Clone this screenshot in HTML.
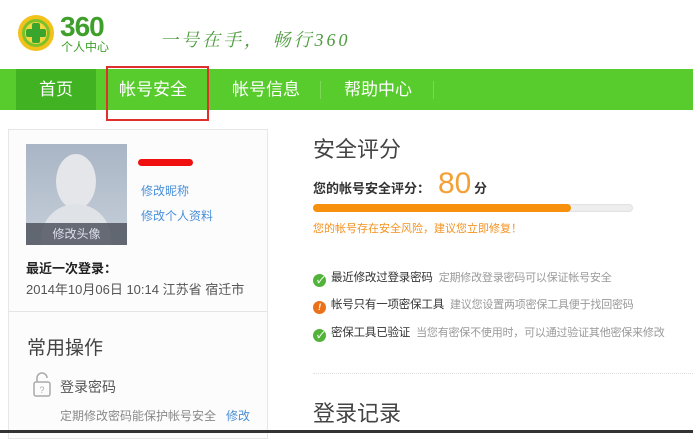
<!DOCTYPE html>
<html><head><meta charset="utf-8"><style>
*{margin:0;padding:0;box-sizing:border-box}
body{width:693px;height:433px;overflow:hidden;background:#fff;font-family:"Liberation Sans","Noto Sans CJK SC",sans-serif;position:relative;color:#333}
.a{position:absolute;white-space:nowrap}
.nav{position:absolute;left:0;top:69px;width:693px;height:41px;background:#57cc2c}
.nav .t{position:absolute;top:0;height:41px;line-height:41px;color:#fff;font-size:17px}
.sep{position:absolute;top:12px;width:1px;height:18px;background:#7bd957}
.ck{display:inline-block;width:13px;height:13px;border-radius:50%;background:#52b33a;color:#fff;font-size:9px;line-height:13px;text-align:center;vertical-align:-2px;margin-right:5px;font-weight:bold}
.it{font-size:11.5px;color:#333;letter-spacing:-0.2px}
.it span{color:#999;margin-left:6px;font-size:11px}
</style></head><body>
<svg class="a" style="left:17px;top:14px" width="38" height="38" viewBox="0 0 38 38">
<circle cx="19" cy="19" r="18" fill="#f2c11a"/><circle cx="19" cy="19" r="14" fill="#7cc12a"/>
<circle cx="19" cy="19" r="11" fill="#f7d540"/>
<rect x="15" y="9" width="8" height="20" rx="2" fill="#3aa52d"/><rect x="9" y="15" width="20" height="8" rx="2" fill="#3aa52d"/>
</svg>
<div class="a" style="left:60px;top:12px;font-size:28px;font-weight:bold;color:#3e9f2a;letter-spacing:-1px;line-height:30px">360</div>
<div class="a" style="left:61px;top:40px;font-size:12px;color:#3e9f2a;line-height:14px">个人中心</div>
<div class="a" style="left:160px;top:28px;font-size:18px;color:#4d9b3e;font-style:italic;letter-spacing:3px;line-height:24px;font-family:'Liberation Serif','Noto Serif CJK SC',serif">一号在手， 畅行360</div>
<div class="nav">
<div style="position:absolute;left:16px;top:0;width:80px;height:41px;background:#41b222"></div>
<div class="t" style="left:39px">首页</div>
<div class="t" style="left:119px">帐号安全</div>
<div class="t" style="left:232px">帐号信息</div>
<div class="t" style="left:344px">帮助中心</div>
<div class="sep" style="left:320px"></div><div class="sep" style="left:433px"></div>
</div>
<div class="a" style="left:106px;top:66px;width:103px;height:55px;border:2px solid #e0302e"></div>
<div class="a" style="left:8px;top:129px;width:260px;height:310px;border:1px solid #e6e6e6;background:#fcfcfd"></div>
<div class="a" style="left:9px;top:311px;width:258px;height:1px;background:#e4e4e4"></div>
<div class="a" style="left:26px;top:144px;width:101px;height:101px;background:linear-gradient(#a9b5c5,#c6cfda);overflow:hidden">
<div style="position:absolute;left:30px;top:10px;width:40px;height:55px;border-radius:50%;background:#e4e6ea"></div>
<div style="position:absolute;left:15px;top:60px;width:70px;height:50px;border-radius:35px 35px 0 0;background:#dfe2e6"></div>
<div style="position:absolute;left:0;top:79px;width:101px;height:22px;background:rgba(80,85,95,.85);color:#dde;font-size:12px;text-align:center;line-height:22px">修改头像</div>
</div>
<div class="a" style="left:138px;top:159px;width:55px;height:7px;border-radius:4px;background:#f01010"></div>
<div class="a" style="left:141px;top:182px;font-size:12px;color:#4a90d9">修改昵称</div>
<div class="a" style="left:141px;top:207px;font-size:12px;color:#4a90d9">修改个人资料</div>
<div class="a" style="left:26px;top:258px;font-size:13px;font-weight:bold;color:#222">最近一次登录：</div>
<div class="a" style="left:26px;top:279px;font-size:13px;color:#555">2014年10月06日 10:14 江苏省 宿迁市</div>
<div class="a" style="left:27px;top:333px;font-size:19px;color:#444">常用操作</div>
<svg class="a" style="left:33px;top:372px" width="18" height="25" viewBox="0 0 18 25"><path d="M4 10V6a5 5 0 0 1 10 0" fill="none" stroke="#aaa" stroke-width="1.5"/><rect x="1" y="10" width="16" height="14" rx="2" fill="none" stroke="#aaa" stroke-width="1.5"/><text x="9" y="21" font-size="9" fill="#aaa" text-anchor="middle" font-family="Liberation Sans">?</text></svg>
<div class="a" style="left:60px;top:377px;font-size:14px;color:#555">登录密码</div>
<div class="a" style="left:60px;top:407px;font-size:12px;color:#888">定期修改密码能保护帐号安全</div>
<div class="a" style="left:226px;top:407px;font-size:12px;color:#4a90d9">修改</div>
<div class="a" style="left:313px;top:132px;font-size:22px;color:#444">安全评分</div>
<div class="a" style="left:313px;top:178px;font-size:13px;font-weight:bold;color:#333">您的帐号安全评分：</div>
<div class="a" style="left:438px;top:166px;font-size:30px;color:#f5a035;line-height:36px">80</div>
<div class="a" style="left:474px;top:178px;font-size:13px;font-weight:bold;color:#333">分</div>
<div class="a" style="left:313px;top:204px;width:320px;height:8px;border-radius:4px;background:#eee;border:1px solid #e2e2e2"></div>
<div class="a" style="left:313px;top:204px;width:258px;height:8px;border-radius:4px;background:#f7910d"></div>
<div class="a" style="left:313px;top:220px;font-size:11px;color:#f39221">您的帐号存在安全风险，建议您立即修复！</div>
<div class="a it" style="left:313px;top:269px"><i class="ck">✓</i>最近修改过登录密码<span>定期修改登录密码可以保证帐号安全</span></div>
<div class="a it" style="left:313px;top:296px"><i class="ck" style="background:#ec7018">!</i>帐号只有一项密保工具<span>建议您设置两项密保工具便于找回密码</span></div>
<div class="a it" style="left:313px;top:324px"><i class="ck">✓</i>密保工具已验证<span>当您有密保不使用时，可以通过验证其他密保来修改</span></div>
<div class="a" style="left:313px;top:373px;width:380px;border-top:1px dotted #ddd"></div>
<div class="a" style="left:313px;top:396px;font-size:22px;color:#444">登录记录</div>
<div class="a" style="left:0;top:430px;width:693px;height:3px;background:#333"></div>
</body></html>
